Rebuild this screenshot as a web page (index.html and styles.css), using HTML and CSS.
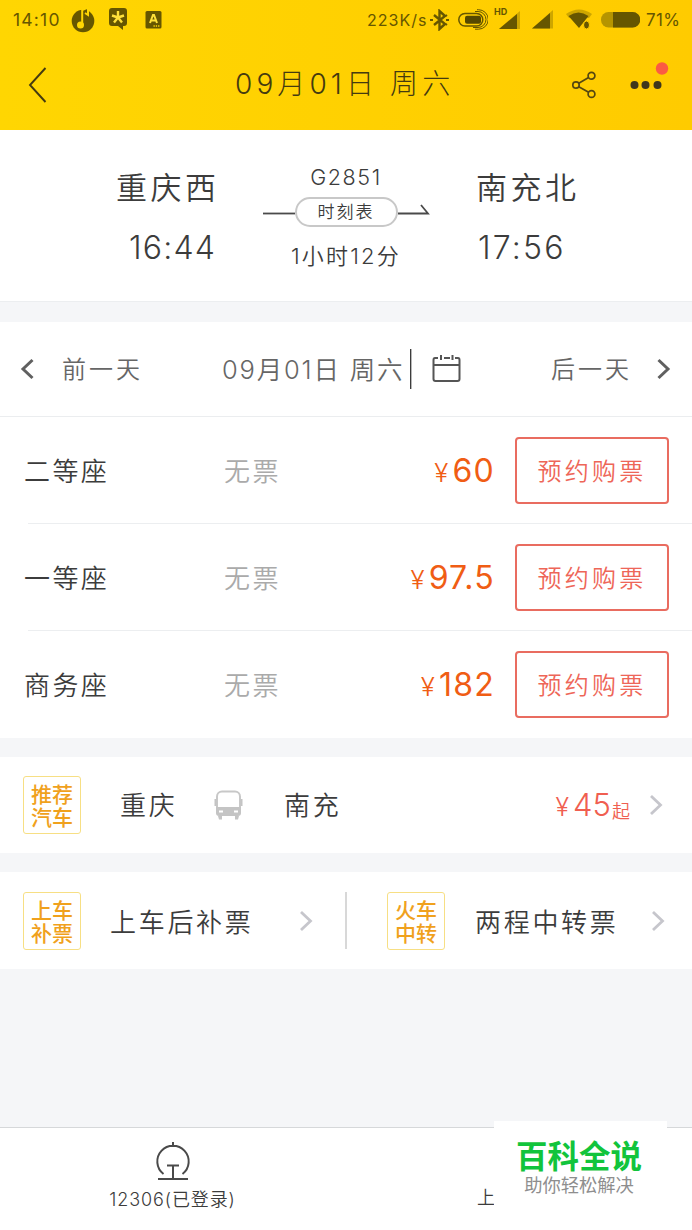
FILE: index.html
```html
<!DOCTYPE html>
<html lang="zh-CN">
<head>
<meta charset="utf-8">
<title>09月01日 周六</title>
<link rel="stylesheet" href="styles.css">
</head>
<body>
<div class="screen">
  <header class="header">
    <div class="status">
      <span class="clock">14:10</span>
      <svg width="24" height="26" viewBox="0 0 24 26"><circle cx="12" cy="14" r="11.3" fill="#665600"/><path d="M11.200 18V3L17 .5V8l-3-2" fill="#665600" stroke="#ffd602" stroke-width="2"/><ellipse cx="9.500" cy="18" rx="3.500" ry="3.600" fill="#ffd602"/></svg>
      <svg width="20" height="25" viewBox="0 0 20 25"><path d="M4 1h12q3 0 3 3v12q0 3-3 3h-1v4l-5-4H4q-3 0-3-3V4q0-3 3-3z" fill="#665600"/><path d="M10 4v6.500L4 8.500M10 10.500l6-2M10 10.500l-4 5M10 10.500l4 5" fill="none" stroke="#ffe13a" stroke-width="2.400"/></svg>
      <svg width="17" height="19" viewBox="0 0 17 19"><rect x=".5" y="1" width="16" height="17.500" rx="1.500" fill="#665600"/><path d="M5 13l3-8h1l3 8M6.500 10.500h4" fill="none" stroke="#ffe13a" stroke-width="2"/><path d="M8.500 16h6" stroke="#ffd602" stroke-width="1.300" stroke-dasharray="1.300 1"/></svg>
      <span class="speed">223K/s</span>
      <svg width="20" height="22" viewBox="0 0 20 22"><path d="M4 6l11 9-5.500 5V2L15 7 4 16" fill="none" stroke="#665600" stroke-width="2.400"/><path d="M0 11h3M16 11h3M15.500 7l1.500-1M15.500 15l1.500 1" stroke="#665600" stroke-width="2"/></svg>
      <svg width="30" height="21" viewBox="0 0 30 21"><rect x=".8" y="4.500" width="24" height="12.500" rx="6.200" fill="none" stroke="#665600" stroke-width="1.500"/><rect x="7" y="6.800" width="16" height="8" rx="2" fill="#554800"/><path d="M17 2.500h3a8 8 0 0 1 0 16h-5M19 .7h1.500a9.500 9.500 0 0 1 0 19.500H17" fill="none" stroke="#665600"/></svg>
      <svg class="signal" width="27" height="23" viewBox="0 0 27 23"><path d="M5 22L26 4v18z" fill="#cda600"/><path d="M5 22L23 7v15z" fill="#665600"/><text class="hd" x="0" y="8">HD</text></svg>
      <svg width="22" height="19" viewBox="0 0 22 19"><path d="M0 18.500L21 0v18.500z" fill="#cda600"/><path d="M0 18.500L18 3v15.500z" fill="#665600"/></svg>
      <svg width="26" height="21" viewBox="0 0 26 21"><path d="M0 5q13-9 26 0l-3 4H3z" fill="#cda600"/><path d="M2.500 7q10-7 20 0L13 19z" fill="#665600"/><ellipse cx="20.500" cy="16" rx="3" ry="4" fill="#665600" stroke="#ffd000"/></svg>
      <svg width="39" height="16" viewBox="0 0 39 16"><rect width="39" height="15.500" rx="7.500" fill="#b59400"/><path d="M12 0h19.500a7.700 7.700 0 0 1 0 15.500H12z" fill="#665600"/></svg>
      <span class="percent">71%</span>
    </div>
    <div class="titlebar">
      <svg width="20" height="38" viewBox="0 0 20 38"><path d="M17.500 2L2 19l15.500 17" fill="none" stroke="#443a10" stroke-width="1.900"/></svg>
      <h1 class="title">09月01日 周六</h1>
      <svg width="24" height="28" viewBox="0 0 24 28"><g fill="none" stroke="#554710" stroke-width="1.700"><circle cx="4" cy="14" r="3.200"/><circle cx="19.500" cy="4.800" r="3.400"/><circle cx="19.500" cy="23" r="3.400"/><path d="M6.800 12.300l9.800-5.800M6.800 15.700l9.800 5.600"/></g></svg>
      <svg width="42" height="46" viewBox="0 0 42 46"><g fill="#3f371c"><circle cx="5.500" cy="23" r="4"/><circle cx="16.500" cy="23" r="4"/><circle cx="28.500" cy="23" r="4"/></g><circle cx="33" cy="6.500" r="6.200" fill="#fb5b43"/></svg>
    </div>
  </header>

  <section class="route">
    <div class="station from"><div class="city">重庆西</div><div class="time">16:44</div></div>
    <div class="train">
      <div class="number">G2851</div>
      <div class="arrow">
        <svg width="32" height="30" viewBox="0 0 32 30"><path d="M0 16.500h32" stroke="#4a4a4a" stroke-width="1.800"/></svg>
        <span class="pill">时刻表</span>
        <svg width="32" height="30" viewBox="0 0 32 30"><path d="M0 16.500h30L23 8" fill="none" stroke="#4a4a4a" stroke-width="1.800"/></svg>
      </div>
      <div class="duration">1小时12分</div>
    </div>
    <div class="station to"><div class="city">南充北</div><div class="time">17:56</div></div>
  </section>

  <nav class="days">
    <svg width="15" height="22" viewBox="0 0 15 22"><path d="M12.500 2L3 11l9.500 9" fill="none" stroke="#606060" stroke-width="3"/></svg>
    <span class="prev">前一天</span>
    <span class="date">09月01日 周六</span>
    <svg class="calendar" width="52" height="42" viewBox="0 0 52 42"><path d="M.7 1v40" stroke="#333" stroke-width="1.300"/><g fill="none" stroke="#555" stroke-width="2"><path d="M28 10h-3q-1.500 0-1.500 2v19q0 2 2 2h22q2 0 2-2V12q0-2-1.500-2h-3M23.500 17h26M34 10h6"/><path d="M31 7v5M42.500 7v5"/></g></svg>
    <span class="next">后一天</span>
    <svg width="15" height="22" viewBox="0 0 15 22"><path d="M2.500 2L12 11l-9.500 9" fill="none" stroke="#606060" stroke-width="3"/></svg>
  </nav>

  <section class="seats">
    <div class="seat"><span class="name">二等座</span><span class="stock">无票</span><span class="price"><i>¥</i>60</span><button class="book">预约购票</button></div>
    <div class="seat"><span class="name">一等座</span><span class="stock">无票</span><span class="price"><i>¥</i>97.5</span><button class="book">预约购票</button></div>
    <div class="seat"><span class="name">商务座</span><span class="stock">无票</span><span class="price"><i>¥</i>182</span><button class="book">预约购票</button></div>
  </section>

  <section class="coach">
    <span class="tag"><span>推荐</span><span>汽车</span></span>
    <span class="place">重庆</span>
    <svg width="30" height="30" viewBox="0 0 30 30"><rect x="3" y="1.500" width="23" height="23" rx="5" fill="#fff" stroke="#c8c8c8" stroke-width="2"/><path d="M2 17h25v6q0 3-3 3H5q-3 0-3-3z" fill="#c4c4c4"/><path d="M1.500 9v7M27.500 9v7" stroke="#c4c4c4" stroke-width="2"/><path d="M4 26h4v3.500H5zM21 26h4l-1 3.500h-3z" fill="#c4c4c4"/><path d="M5 21.500h4M20 21.500h4" stroke="#fff" stroke-width="2.200"/></svg>
    <span class="place">南充</span>
    <span class="fare"><i>¥</i>45<small>起</small></span>
    <svg width="15" height="22" viewBox="0 0 15 22"><path d="M2 2l9.500 9L2 20" fill="none" stroke="#c6c6cc" stroke-width="2.800"/></svg>
  </section>

  <section class="options">
    <a class="option"><span class="tag"><span>上车</span><span>补票</span></span><span class="label">上车后补票</span><svg width="15" height="22" viewBox="0 0 15 22"><path d="M2 2l9.500 9L2 20" fill="none" stroke="#c6c6cc" stroke-width="2.800"/></svg></a>
    <a class="option second"><span class="tag"><span>火车</span><span>中转</span></span><span class="label">两程中转票</span><svg width="15" height="22" viewBox="0 0 15 22"><path d="M2 2l9.500 9L2 20" fill="none" stroke="#c6c6cc" stroke-width="2.800"/></svg></a>
  </section>

  <footer class="tabs">
    <div class="tab">
      <svg width="36" height="40" viewBox="0 0 36 40"><g fill="none" stroke="#4a4a4a" stroke-width="2"><path d="M8.500 33a15.700 15.700 0 1 1 19 0M18 1v5M12 24.500h12M18 24.500V38M3 38h30"/></g></svg>
      <span>12306(已登录)</span>
    </div>
    <div class="tab partial"><span>上</span></div>
    <div class="brand"><strong>百科全说</strong><span>助你轻松解决</span></div>
  </footer>
</div>
</body>
</html>
```
FILE: styles.css
```css
* { box-sizing: border-box; }
body { margin: 0; }
svg { display: block; flex: none; }
i { font-style: normal; }
.screen {
  width: 692px; height: 1230px; overflow: hidden;
  display: flex; flex-direction: column;
  background: #f5f6f8; color: #3c3c3c;
  font-family: Inter, "Noto Sans CJK SC", sans-serif;
  font-weight: 350; white-space: nowrap;
}
.header { height: 130px; background: linear-gradient(90deg, #ffd602, #ffcb00); }
.status {
  height: 39px; display: grid; align-items: center;
  grid-template-columns: 58px 37px 37px 222px 63px 28px 36px 38px 34px 35px 45px 46px;
  padding-left: 13px; color: #665600; font-size: 16px; font-weight: 400;
}
.clock { font-size: 17.500px; letter-spacing: 1.200px; }
.speed { letter-spacing: 1px; }
.percent { font-size: 17px; letter-spacing: .3px; }
.signal { margin-top: -3px; }
.hd { font: 700 9px Inter, sans-serif; fill: #665600; }
.titlebar {
  height: 91px; display: grid; align-items: center;
  grid-template-columns: 207px 337px 57px 42px; padding-left: 28px;
}
.title { margin: 0; color: #443a10; font-size: 28px; font-weight: 300; letter-spacing: 4.100px; line-height: 36px; padding-bottom: 2px; }
.route {
  height: 172px; margin-bottom: 20px; background: #fff; border-bottom: 1px solid #eceef0;
  display: grid; grid-template-columns: 146px 168px 1fr; padding-left: 116px;
}
.station { padding-top: 35px; }
.city { font-size: 31px; line-height: 46px; letter-spacing: 3.500px; height: 46px; }
.time { font-size: 32px; line-height: 40px; margin-top: 17px; letter-spacing: 1.200px; }
.from .time { padding-left: 13px; }
.to { padding-left: 46px; }
.to .time { padding-left: 2px; letter-spacing: 2.200px; }
.train { display: flex; flex-direction: column; align-items: center; padding-top: 32px; }
.number { font-size: 21.500px; line-height: 30px; letter-spacing: 1.600px; }
.arrow { display: flex; align-items: center; margin-top: 5px; }
.pill {
  width: 103px; height: 30px; border: 2px solid #c8c8c8; border-radius: 15px;
  text-align: center; font-size: 17px; line-height: 27px; letter-spacing: 2px;
}
.duration { font-size: 22px; line-height: 30px; margin-top: 14px; letter-spacing: 2.200px; }
.days {
  height: 95px; background: #fff; border-bottom: 1px solid #ebedef; color: #666;
  display: grid; align-items: center; font-size: 24px;
  grid-template-columns: 42px 160px 188px 141px 105px 15px; padding-left: 20px;
}
.prev, .next { letter-spacing: 3px; padding-bottom: 2px; }
.date { font-size: 25.500px; letter-spacing: 1.800px; padding-bottom: 3px; }
.seats { background: #fff; margin-bottom: 19px; }
.seat {
  height: 107px; display: grid; align-items: center;
  grid-template-columns: 200px 150px 121px 154px; padding-left: 24px;
  background: linear-gradient(#eceef0, #eceef0) 28px 100% / 100% 1px no-repeat;
}
.seat:last-child { background: none; }
.name, .stock { font-size: 26px; letter-spacing: 2.400px; padding-bottom: 2px; }
.stock { color: #aaa; }
.price { color: #f05d14; font-size: 32px; font-weight: 400; letter-spacing: 1.200px; text-align: right; }
.price i { font-size: 26px; font-weight: 300; margin-right: 3px; }
.book {
  width: 154px; height: 67px; margin-left: 20px; padding: 0 0 2px;
  background: #fff; border: 2px solid #e96c60; border-radius: 4px;
  color: #ee6658; font: inherit; font-size: 24px; letter-spacing: 3.200px;
}
.coach {
  height: 97px; margin-bottom: 19px; background: #fff; display: grid; align-items: center;
  grid-template-columns: 97px 94px 70px 120px 226px 36px; padding-left: 23px;
}
.coach > svg:last-child, .option > svg { justify-self: end; }
.place, .label { font-size: 26px; letter-spacing: 2.700px; padding-bottom: 2px; }
.tag {
  width: 58px; height: 58px; border: 1.500px solid #f7df84; border-radius: 3px;
  color: #f0a11d; font-family: "Noto Sans CJK SC", sans-serif;
  font-size: 21px; font-weight: 500; line-height: 23px; padding-top: 5px;
  display: flex; flex-direction: column; align-items: center;
}
.coach > svg:last-child { margin-right: 2px; }
.fare { color: #f05e50; font-size: 31px; text-align: right; }
.fare i { font-size: 25px; margin-right: 4px; }
.fare small { font-size: 18px; margin-left: 1px; position: relative; top: 2px; }
.options { height: 97px; background: #fff; display: grid; align-items: center; grid-template-columns: 347px 345px; }
.option { height: 57px; display: grid; align-items: center; grid-template-columns: 87px 189px 15px; padding-left: 23px; }
.option:first-child { border-right: 2px solid #d8d8d8; }
.option.second { grid-template-columns: 88px 176px 15px; padding-left: 40px; }
.tabs {
  margin-top: 158px; height: 103px; position: relative; background: #fff; border-top: 1px solid #d6d8da;
  display: grid; grid-template-columns: 345px 347px; font-size: 18px;
}
.tab { display: flex; flex-direction: column; align-items: center; padding-top: 13px; line-height: 24px; }
.tab span { margin-top: 7px; letter-spacing: .9px; }
.tab.partial { align-items: flex-start; padding: 51px 0 0 132px; }
.brand {
  position: absolute; left: 494px; top: -7px; width: 173px; height: 85px; background: #fff;
  display: flex; flex-direction: column; align-items: center;
  font-family: "Noto Sans CJK SC", sans-serif; padding: 14px 3px 0 0;
}
.brand strong { color: #12c43c; font-size: 31.500px; font-weight: 700; line-height: 38px; }
.brand span { color: #8e8e8e; font-size: 18.300px; font-weight: 400; line-height: 22px; }
```
